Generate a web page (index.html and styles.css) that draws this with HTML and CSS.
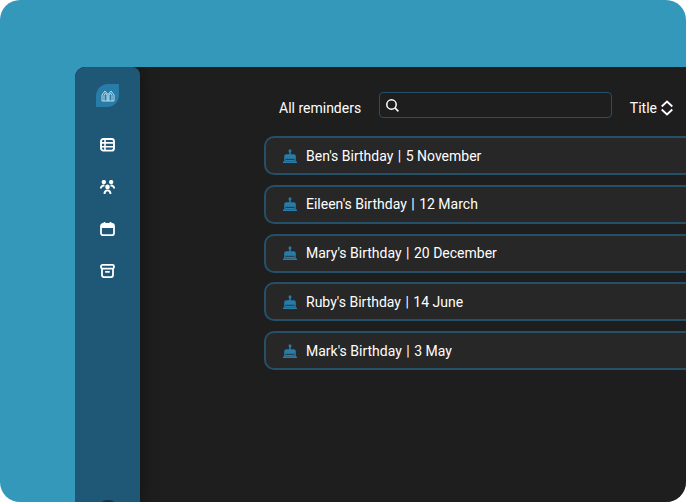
FILE: index.html
```html
<!DOCTYPE html>
<html lang="en">
<head>
<meta charset="utf-8">
<title>Reminders</title>
<link rel="stylesheet" href="styles.css">
</head>
<body>
<svg class="defs" aria-hidden="true">
  <symbol id="cake" viewBox="0 0 14 14">
    <ellipse cx="7" cy="1.900" rx="1.500" ry="1.700"/>
    <path d="M6.200 2h1.600v3.300h3a2 2 0 0 1 2 2v5.200H14V14H0v-1.500h1.200V7.300a2 2 0 0 1 2-2h3z"/>
    <path d="M2.600 9.400v3.100h8.800V9.400l-1.100.8-1.100-.8-1.100.8-1.100-.8-1.100.8-1.100-.8-1.100.8z" fill="#272727"/>
    <path d="M2.600 10.700h8.800v1.800H2.600z"/>
  </symbol>
</svg>
<div class="stage">
  <div class="app">
    <nav class="sidebar" aria-label="Main">
      <a class="logo" href="#" aria-label="Home">
        <svg width="14" height="12" viewBox="0 0 14 12" fill="none" stroke="#b9dced" stroke-width="1">
          <path d="M1 11V5l3-4 3 3.500L10 1l3 4v6zM3 11V5.500L4.500 3 6 5.500V11M8 11V5.500L9.500 3 11 5.500V11M7 4.500V11"/>
        </svg>
      </a>
      <a class="nav-link" href="#" aria-label="Reminders">
        <svg width="15" height="14" viewBox="0 0 15 14" fill="none" stroke="#fff" stroke-width="1.900">
          <rect x="1" y="1" width="13" height="11.600" rx="2.400"/>
          <path d="M5 1v12M1 4.900h13M1 8.800h13" stroke-width="1.600"/>
        </svg>
      </a>
      <a class="nav-link" href="#" aria-label="People">
        <svg width="15" height="14" viewBox="0 0 15 14" fill="none" stroke="#fff" stroke-width="1.900">
          <g fill="#fff" stroke="none"><circle cx="3.800" cy="2.100" r="2.200"/><circle cx="11.200" cy="2.100" r="2.200"/><circle cx="7.500" cy="6.900" r="2.300"/></g>
          <path d="M.9 8.600C.9 6.300 2.200 5.400 4.500 5.600M14.100 8.600c0-2.300-1.300-3.200-3.600-3M4.500 14c0-2.700 1-3.600 3-3.600s3 .9 3 3.600"/>
        </svg>
      </a>
      <a class="nav-link" href="#" aria-label="Calendar">
        <svg width="15" height="14" viewBox="0 0 15 14" fill="none" stroke="#fff" stroke-width="1.800">
          <rect x="1" y="2" width="13" height="11.200" rx="2"/>
          <path d="M4.500 0v3M10.500 0v3"/>
          <path d="M1 4.100h13" stroke-width="3.600"/>
        </svg>
      </a>
      <a class="nav-link" href="#" aria-label="Archive">
        <svg width="15" height="14" viewBox="0 0 15 14" fill="none" stroke="#fff" stroke-width="1.800">
          <rect x="1" y=".9" width="13" height="3.700" rx="1.500"/>
          <path d="M2 4.600v6.500q0 2 2 2h7q2 0 2-2V4.600M5.200 7.900h4.600"/>
        </svg>
      </a>
      <span class="avatar"></span>
    </nav>
    <main class="content">
      <header class="toolbar">
        <h1 class="heading">All reminders</h1>
        <label class="search">
          <svg width="13" height="13" viewBox="0 0 13 13" fill="none" stroke="#fff" stroke-width="1.500">
            <circle cx="5.500" cy="5.500" r="4.700"/><path d="M8.900 8.900l3.500 3.500"/>
          </svg>
          <input class="search-input" type="search" aria-label="Search reminders">
        </label>
        <button class="sort" type="button">Title
          <svg width="12" height="16" viewBox="0 0 12 16" fill="none" stroke="#fff" stroke-width="1.800">
            <path d="M.7 6.500L6 1.500l5.300 5M.7 9.500l5.300 5 5.300-5"/>
          </svg>
        </button>
      </header>
      <ul class="list">
        <li class="row"><svg class="cake"><use href="#cake"/></svg><span>Ben's Birthday <span class="bar">|</span> 5 November</span></li>
        <li class="row"><svg class="cake"><use href="#cake"/></svg><span>Eileen's Birthday <span class="bar">|</span> 12 March</span></li>
        <li class="row"><svg class="cake"><use href="#cake"/></svg><span>Mary's Birthday <span class="bar">|</span> 20 December</span></li>
        <li class="row"><svg class="cake"><use href="#cake"/></svg><span>Ruby's Birthday <span class="bar">|</span> 14 June</span></li>
        <li class="row"><svg class="cake"><use href="#cake"/></svg><span>Mark's Birthday <span class="bar">|</span> 3 May</span></li>
      </ul>
    </main>
  </div>
</div>
</body>
</html>
```
FILE: styles.css
```css
* {
  box-sizing: border-box;
}

body {
  margin: 0;
  background: #fff;
  color: #fff;
  font: 14px/20px Roboto, sans-serif;
}

svg {
  display: block;
  flex: none;
}

.defs {
  display: none;
}

.stage {
  display: flex;
  height: 100vh;
  padding: 67px 0 0 75px;
  overflow: hidden;
  border-radius: 20px;
  background: #3498bb;
}

.app {
  display: flex;
  flex: 1;
  min-width: 0;
  overflow: hidden;
  border-radius: 10px 0 0 0;
  background: #1e1e1e;
}

.sidebar {
  display: flex;
  flex: none;
  flex-direction: column;
  align-items: center;
  width: 65px;
  padding-top: 17px;
  overflow: hidden;
  border-radius: 10px 8px 0 0;
  background: #1f5876;
  box-shadow: 2px 0 16px rgba(0, 0, 0, 0.35);
}

.logo {
  display: flex;
  align-items: center;
  justify-content: center;
  width: 23px;
  height: 23px;
  margin-bottom: 17px;
  border-radius: 12px 1px;
  background: #287ca8;
}

.nav-link {
  display: flex;
  align-items: center;
  justify-content: center;
  width: 42px;
  height: 42px;
}

.avatar {
  flex: none;
  width: 24px;
  height: 24px;
  margin: auto 0 -22px;
  border-radius: 50%;
  background: #17303d;
}

.content {
  flex: 1;
  min-width: 0;
  padding: 25px 0 0 124px;
  overflow: hidden;
}

.toolbar {
  display: flex;
  align-items: center;
  gap: 18px;
  padding: 0 13px 0 15px;
}

.heading {
  margin: 6px 0 0;
  font-size: 14px;
  font-weight: 400;
  white-space: nowrap;
}

.search {
  display: flex;
  flex: 1;
  align-items: center;
  min-width: 0;
  height: 26px;
  padding: 0 6px;
  border: 1px solid #265067;
  border-radius: 4px;
}

.search-input {
  flex: 1;
  min-width: 0;
  border: 0;
  outline: 0;
  background: none;
  color: inherit;
  font: inherit;
}

.sort {
  display: flex;
  align-items: center;
  gap: 4px;
  margin: 6px 0 0;
  padding: 0;
  border: 0;
  background: none;
  color: inherit;
  font: inherit;
}

.list {
  display: flex;
  flex-direction: column;
  justify-content: space-between;
  height: 234px;
  margin: 18px 0 0;
  padding: 0;
  list-style: none;
}

.row {
  display: flex;
  align-items: center;
  gap: 9px;
  height: 39px;
  padding-left: 17px;
  border: 2px solid #265067;
  border-right: 0;
  border-radius: 10px 0 0 10px;
  background: #272727;
  white-space: nowrap;
}

.bar {
  margin: 0 1px;
}

.cake {
  width: 14px;
  height: 14px;
  fill: #287ca8;
}
```
